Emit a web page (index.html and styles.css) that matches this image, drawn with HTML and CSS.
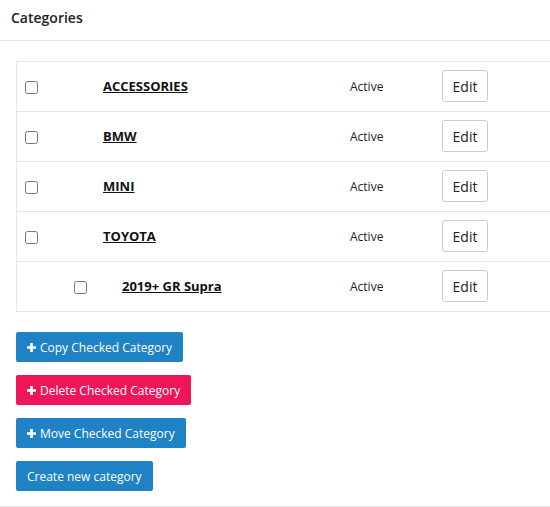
FILE: index.html
```html
<!DOCTYPE html>
<html>
<head>
<meta charset="utf-8">
<link rel="stylesheet" href="styles.css">
</head>
<body>
<div class="page">
  <div class="header">Categories</div>
  <div class="content">
    <div class="table">
      <div class="row">
        <span class="cell-check"><input type="checkbox" class="cb"></span>
        <span class="cell-name"><a href="#">ACCESSORIES</a></span>
        <span class="cell-status">Active</span>
        <span class="cell-edit"><button class="edit">Edit</button></span>
      </div>
      <div class="row">
        <span class="cell-check"><input type="checkbox" class="cb"></span>
        <span class="cell-name"><a href="#">BMW</a></span>
        <span class="cell-status">Active</span>
        <span class="cell-edit"><button class="edit">Edit</button></span>
      </div>
      <div class="row">
        <span class="cell-check"><input type="checkbox" class="cb"></span>
        <span class="cell-name"><a href="#">MINI</a></span>
        <span class="cell-status">Active</span>
        <span class="cell-edit"><button class="edit">Edit</button></span>
      </div>
      <div class="row">
        <span class="cell-check"><input type="checkbox" class="cb"></span>
        <span class="cell-name"><a href="#">TOYOTA</a></span>
        <span class="cell-status">Active</span>
        <span class="cell-edit"><button class="edit">Edit</button></span>
      </div>
      <div class="row sub">
        <span class="cell-check"><input type="checkbox" class="cb"></span>
        <span class="cell-name"><a href="#">2019+ GR Supra</a></span>
        <span class="cell-status">Active</span>
        <span class="cell-edit"><button class="edit">Edit</button></span>
      </div>
    </div>
    <div class="actions">
      <button class="btn blue"><svg class="plus" viewBox="0 0 10 10"><path d="M3.5 0h3v3.5H10v3H6.5V10h-3V6.5H0v-3h3.5z" fill="#fff"/></svg>Copy Checked Category</button>
      <button class="btn pink"><svg class="plus" viewBox="0 0 10 10"><path d="M3.5 0h3v3.5H10v3H6.5V10h-3V6.5H0v-3h3.5z" fill="#fff"/></svg>Delete Checked Category</button>
      <button class="btn blue"><svg class="plus" viewBox="0 0 10 10"><path d="M3.5 0h3v3.5H10v3H6.5V10h-3V6.5H0v-3h3.5z" fill="#fff"/></svg>Move Checked Category</button>
      <button class="btn blue">Create new category</button>
    </div>
  </div>
</div>
</body>
</html>
```
FILE: styles.css
```css
html, body {
  margin: 0;
  padding: 0;
  overflow: hidden;
  background: #fff;
}
body {
  font-family: "Open Sans", "Liberation Sans", sans-serif;
  color: #222;
}
.page {
  width: 550px;
  height: 507px;
  border-bottom: 1px solid #e5e5e5;
  box-sizing: border-box;
}
.header {
  height: 40px;
  line-height: 35px;
  padding-left: 11px;
  font-size: 14px;
  font-weight: 600;
  color: #222;
  border-bottom: 1px solid #e5e5e5;
}
.content {
  padding: 20px 0 0 16px;
}
.table {
  margin-right: -30px;
  border: 1px solid #e5e5e5;
  border-right: none;
}
.row {
  display: flex;
  align-items: center;
  height: 49px;
  border-top: 1px solid #e5e5e5;
}
.row:first-child {
  border-top: none;
}
.cell-check {
  box-sizing: border-box;
  width: 86px;
  padding-left: 8px;
  display: flex;
  align-items: center;
}
.cb {
  margin: 2px 0 0 0;
  width: 13px;
  height: 13px;
}
.cell-name {
  width: 247px;
  font-size: 13px;
  font-weight: 700;
  margin-top: -1px;
}
.cell-name a {
  color: #111;
  text-decoration: underline;
}
.cell-status {
  width: 92px;
  font-size: 12px;
  color: #222;
  margin-top: -1px;
}
.cell-edit {
  display: flex;
  margin-top: -1px;
}
.edit {
  width: 46px;
  height: 32px;
  border: 1px solid #ccc;
  border-radius: 3px;
  background: #fff;
  font-family: "Open Sans", "Liberation Sans", sans-serif;
  font-size: 14px;
  color: #222;
  padding: 0;
}
.sub .cell-check {
  width: 105px;
  padding-left: 57px;
}
.sub .cell-name {
  width: 228px;
}
.actions {
  display: flex;
  flex-direction: column;
  align-items: flex-start;
  gap: 13px;
  padding-top: 20px;
}
.btn {
  height: 30px;
  border: none;
  border-radius: 2px;
  padding: 0 11px;
  font-family: "Open Sans", "Liberation Sans", sans-serif;
  font-size: 12px;
  color: #fff;
  display: flex;
  align-items: center;
}
.blue {
  background: #1e82c4;
}
.pink {
  background: #ee1558;
}
.plus {
  width: 9px;
  height: 9px;
  margin-right: 4px;
}
```
